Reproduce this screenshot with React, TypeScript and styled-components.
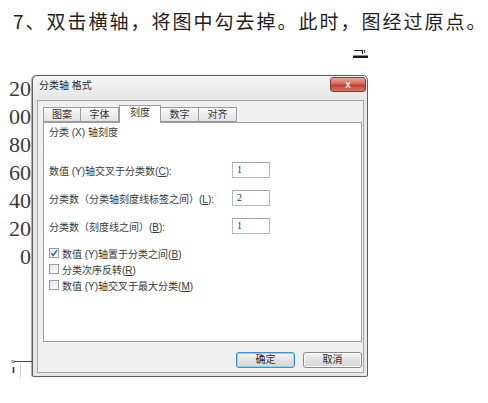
import { createGlobalStyle, styled } from 'styled-components'

const GlobalStyle = createGlobalStyle`
  html, body {
    margin: 0;
    padding: 0;
    background: #ffffff;
  }
  body {
    width: 488px;
    height: 403px;
    overflow: hidden;
    font-family: 'Liberation Sans', 'Noto Sans CJK SC', sans-serif;
  }
`

const AXIS_LABELS = ['20', '00', '80', '60', '40', '20', '0']
const TABS = ['图案', '字体', '刻度', '数字', '对齐']

const FIELDS = [
  { label: '数值 (Y)轴交叉于分类数', key: 'C', value: '1' },
  { label: '分类数（分类轴刻度线标签之间）', key: 'L', value: '2' },
  { label: '分类数（刻度线之间）', key: 'B', value: '1' },
]

const OPTIONS = [
  { label: '数值 (Y)轴置于分类之间', key: 'B', checked: true },
  { label: '分类次序反转', key: 'R', checked: false },
  { label: '数值 (Y)轴交叉于最大分类', key: 'M', checked: false },
]

const App = () => {
  return (
    <Page>
      <GlobalStyle />
      <Heading>7、双击横轴，将图中勾去掉。此时，图经过原点。</Heading>
      <MarkRow>
        <svg width="15" height="10" viewBox="0 0 15 10">
          <path d="M1 1.5 H9.5 V5" stroke="#222" strokeWidth="1.2" fill="none" />
          <path d="M11.5 1 V4" stroke="#444" strokeWidth="1" fill="none" />
          <rect x="0" y="6.5" width="15" height="2.5" fill="#1a1a1a" />
        </svg>
      </MarkRow>
      <Stage>
        <AxisColumn>
          {AXIS_LABELS.map((n, i) => (
            <AxisLabel key={i}>{n}</AxisLabel>
          ))}
          <AxisFoot>
            <svg width="32" height="19" viewBox="0 0 32 19">
              <circle cx="13" cy="2.5" r="1.2" fill="none" stroke="#555" strokeWidth="0.8" />
              <path d="M14 2.5 H32" stroke="#444" strokeWidth="1" />
              <path d="M20.5 5 V19" stroke="#ccc" strokeWidth="1" />
              <path d="M13.5 8 V14" stroke="#333" strokeWidth="1.6" />
            </svg>
          </AxisFoot>
        </AxisColumn>

        <Window>
          <TitleBar>
            <TitleText>分类轴 格式</TitleText>
            <CloseButton>x</CloseButton>
          </TitleBar>
          <Client>
            <TabStrip>
              {TABS.map((t) => (
                <Tab key={t} active={t === '刻度'}>
                  {t}
                </Tab>
              ))}
            </TabStrip>
            <Panel>
              <PanelTitle>分类 (X) 轴刻度</PanelTitle>
              <Fields>
                {FIELDS.map((f) => (
                  <FieldRow key={f.label}>
                    <span>
                      {f.label}(<AccessKey>{f.key}</AccessKey>):
                    </span>
                    <NumberInput>{f.value}</NumberInput>
                  </FieldRow>
                ))}
              </Fields>
              <Options>
                {OPTIONS.map((o) => (
                  <OptionRow key={o.label}>
                    <CheckBox>
                      {o.checked && (
                        <svg width="8" height="8" viewBox="0 0 8 8">
                          <path d="M1.2 4.2 L3.2 6.4 L7 1.2" stroke="#2b5fc0" strokeWidth="1.5" fill="none" />
                        </svg>
                      )}
                    </CheckBox>
                    <span>
                      {o.label}(<AccessKey>{o.key}</AccessKey>)
                    </span>
                  </OptionRow>
                ))}
              </Options>
            </Panel>
            <Footer>
              <DialogButton primary>确定</DialogButton>
              <DialogButton>取消</DialogButton>
            </Footer>
          </Client>
        </Window>
      </Stage>
    </Page>
  )
}

const Page = styled.div`
  display: flex;
  flex-direction: column;
  width: 488px;
  height: 403px;
`

const Heading = styled.p`
  margin: 0;
  padding: 9px 0 0 13px;
  font-family: 'Noto Sans CJK SC', sans-serif;
  font-size: 19px;
  line-height: 24px;
  letter-spacing: 2px;
  color: #1e1e1e;
  white-space: nowrap;
`

const MarkRow = styled.div`
  display: flex;
  height: 10px;
  margin-top: 16px;
  padding-left: 353px;
`

// 左侧被对话框遮住的图表坐标轴
const Stage = styled.div`
  display: flex;
  margin-top: 16px;
  height: 302px;
`

const AxisColumn = styled.div`
  display: flex;
  flex-direction: column;
  width: 32px;
  overflow: hidden;
  font-family: 'Liberation Serif', serif;
  font-size: 22px;
  color: #3a3a3a;
`

const AxisLabel = styled.div`
  height: 28px;
  line-height: 28px;
  text-align: right;
  padding-right: 1px;
`

const AxisFoot = styled.div`
  margin-top: auto;
  height: 19px;
`

// 对话框窗口
const Window = styled.div`
  display: flex;
  flex-direction: column;
  width: 336px;
  height: 302px;
  box-sizing: border-box;
  border: 1px solid #5f5f5f;
  border-radius: 5px 5px 2px 2px;
  background: #e7e7e7;
  box-shadow: -1px 0 1px rgba(0, 0, 0, 0.35);
`

const TitleBar = styled.div`
  display: flex;
  justify-content: space-between;
  align-items: flex-start;
  height: 24px;
  padding: 0 1px 0 6px;
  background: linear-gradient(#f6f6f6, #e6e6e6);
  border-radius: 5px 5px 0 0;
`

const TitleText = styled.span`
  padding-top: 2px;
  font-size: 10px;
  line-height: 16px;
  color: #2a2a2a;
`

const CloseButton = styled.div`
  display: flex;
  align-items: center;
  justify-content: center;
  width: 36px;
  height: 15px;
  margin-top: 1px;
  box-sizing: border-box;
  border: 1px solid #8c3b33;
  border-radius: 3px;
  background: linear-gradient(#e8a69c 0%, #d4675b 45%, #c2402f 55%, #d8735f 100%);
  color: #fbeeee;
  font-size: 10px;
  font-weight: bold;
  line-height: 1;
`

const Client = styled.div`
  display: flex;
  flex-direction: column;
  flex: 1;
  margin: 0 3px 3px 4px;
  padding: 4px 1px 0 5px;
  border: 1px solid #a5a5a5;
  background: #f0f0f0;
`

const TabStrip = styled.div`
  display: flex;
  align-items: flex-end;
  height: 17px;
`

const Tab = styled.div<{ active?: boolean }>`
  position: relative;
  box-sizing: border-box;
  width: ${({ active }) => (active ? '42px' : '38px')};
  height: ${({ active }) => (active ? '18px' : '15px')};
  margin-bottom: ${({ active }) => (active ? '-1px' : '0')};
  z-index: ${({ active }) => (active ? 1 : 0)};
  border: 1px solid #9c9c9c;
  border-bottom: ${({ active }) => (active ? 'none' : '1px solid #9c9c9c')};
  border-left: ${({ active }) => (active ? '1px solid #9c9c9c' : 'none')};
  background: ${({ active }) => (active ? '#ffffff' : 'linear-gradient(#f8f8f8, #e3e3e3)')};
  font-size: 10px;
  line-height: ${({ active }) => (active ? '14px' : '13px')};
  text-align: center;
  color: #333;

  &:first-child {
    border-left: 1px solid #9c9c9c;
  }
`

const Panel = styled.div`
  display: flex;
  flex-direction: column;
  height: 220px;
  box-sizing: border-box;
  padding: 2px 0 0 5px;
  border: 1px solid #9c9c9c;
  background: #ffffff;
  font-size: 10px;
  color: #383838;
`

const PanelTitle = styled.div`
  line-height: 16px;
`

const Fields = styled.div`
  display: flex;
  flex-direction: column;
  gap: 12px;
  margin-top: 21px;
`

const FieldRow = styled.div`
  display: grid;
  grid-template-columns: 183px 38px;
  align-items: center;
  height: 16px;
  white-space: nowrap;
`

const AccessKey = styled.span`
  text-decoration: underline;
`

const NumberInput = styled.div`
  box-sizing: border-box;
  height: 16px;
  padding-left: 4px;
  border: 1px solid #b5b9c2;
  border-top-color: #a3a7b0;
  background: #fff;
  font-family: 'Liberation Serif', serif;
  font-size: 10px;
  line-height: 14px;
  color: #333;
`

const Options = styled.div`
  display: flex;
  flex-direction: column;
  margin-top: 11px;
`

const OptionRow = styled.div`
  display: flex;
  align-items: center;
  gap: 3px;
  height: 16px;
  white-space: nowrap;
`

const CheckBox = styled.div`
  display: flex;
  align-items: center;
  justify-content: center;
  box-sizing: border-box;
  width: 10px;
  height: 10px;
  border: 1px solid #9a9a9a;
  background: linear-gradient(135deg, #e6e6e6, #fbfbfb);
`

const Footer = styled.div`
  display: flex;
  justify-content: flex-end;
  gap: 8px;
  padding-top: 10px;
`

const DialogButton = styled.div<{ primary?: boolean }>`
  box-sizing: border-box;
  width: 59px;
  height: 16px;
  border: 1px solid ${({ primary }) => (primary ? '#3c8fd0' : '#8a8a8a')};
  border-radius: 3px;
  background: linear-gradient(#f6f6f6, #e2e2e2 50%, #d6d6d6);
  box-shadow: ${({ primary }) => (primary ? 'inset 0 0 0 1px #8fd3f5' : 'inset 0 0 0 1px #fafafa')};
  font-size: 10px;
  line-height: 14px;
  text-align: center;
  color: #2a2a2a;
`

export default App
